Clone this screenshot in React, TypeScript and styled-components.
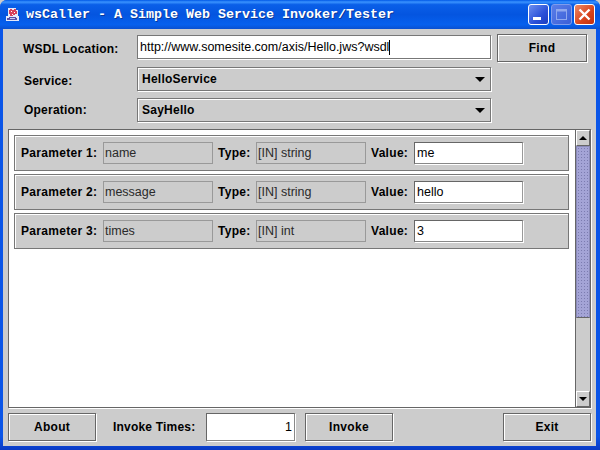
import React from "react";
import styled, { createGlobalStyle } from "styled-components";

const Global = createGlobalStyle`
  html, body { margin: 0; padding: 0; background: #ccc; }
  * { box-sizing: border-box; }
`;

const Win = styled.div`
  width: 600px; height: 450px; display: flex; flex-direction: column;
  background: linear-gradient(180deg, #0a55e8 0%, #0a55e8 97%, #0a3ac4 100%); border-radius: 7px 7px 0 0; overflow: hidden;
  font: 12px "Liberation Sans", Arial, sans-serif; color: #000;
`;
const TitleBar = styled.div`
  height: 29px; flex: none; display: flex; align-items: center; padding: 0 5px 0 5px;
  background: linear-gradient(180deg, #0058e6 0%, #3a93ff 7%, #0a5fe8 16%, #0455e0 50%, #0660ee 85%, #0a50d0 100%);
`;
const Title = styled.div`
  flex: 1; margin-left: 5px; color: #fff; font: bold 13.33px "Liberation Mono", monospace;
  white-space: pre; text-shadow: 1px 1px 0 #0b3a9a;
`;
const WinBtns = styled.div` display: flex; gap: 2px; `;
const WinBtn = styled.div<{ $c: string; $dim?: boolean }>`
  width: 21px; height: 21px; border: 1px solid ${p => (p.$dim ? "#7f9cec" : "#fff")}; border-radius: 3px; background: ${p => p.$c};
  display: flex; align-items: center; justify-content: center;
`;
const Frame = styled.div`
  flex: 1; min-height: 0; margin: 0 4px 4px 3px; background: #ccc;
  display: flex; flex-direction: column; padding: 5px;
`;
const TopForm = styled.div`
  display: grid; grid-template-columns: 129px 354px 90px; align-items: center;
  grid-template-rows: 26px 24px 24px; row-gap: 7px; margin-bottom: 7px;
`;
const FormLabel = styled.div<{ $left: number; $down?: number }>`
  font-weight: bold; letter-spacing: 0.22px; padding-left: ${p => p.$left}px; padding-top: ${p => p.$down ?? 0}px;
`;
const Url = styled.div`
  height: 24px; background: #fff; border: 1px solid #777; box-shadow: 1px 1px 0 #fff;
  display: flex; align-items: center; padding: 0 2px; font-size: 12.5px; white-space: nowrap;
`;
const Caret = styled.span` display: inline-block; width: 1px; height: 15px; background: #000; `;
const FindBtn = styled.button`
  align-self: start; height: 28px; width: 90px; margin-left: 6px; background: #ccc;
  font: bold 12px "Liberation Sans", sans-serif; letter-spacing: 0.3px;
  border: 1px solid #666; border-radius: 0; box-shadow: 1px 1px 0 #fff, inset 1px 1px 0 #fff; padding: 0; color: #000;
`;
const Combo = styled.div`
  height: 24px; border: 1px solid #777; box-shadow: 1px 1px 0 #fff, inset 1px 1px 0 #fff;
  display: flex; align-items: center; justify-content: space-between; padding: 0 5px 0 4px;
  font-weight: bold; letter-spacing: 0.25px;
`;
const Arrow = styled.i<{ $up?: boolean; $w?: number }>`
  display: block; width: 0; height: 0;
  border-left: ${p => p.$w ?? 5}px solid transparent; border-right: ${p => p.$w ?? 5}px solid transparent;
  ${p => (p.$up ? "border-bottom" : "border-top")}: ${p => p.$w ?? 5}px solid #000;
`;
const Pane = styled.div`
  flex: 1; min-height: 0; display: flex; border: 1px solid #666; box-shadow: 1px 1px 0 #fff; background: #fff;
  width: 583px;
`;
const List = styled.div`
  flex: 1; padding: 5px 5px 0 5px; display: flex; flex-direction: column; gap: 3px;
`;
const Row = styled.div`
  height: 36px; background: #ccc; border: 1px solid #777; box-shadow: inset 1px 1px 0 #fff, 1px 1px 0 #fff;
  display: flex; align-items: center; padding-left: 6px; width: 555px;
`;
const B = styled.span<{ $w: number; $ml?: number }>`
  font-weight: bold; letter-spacing: 0.3px; width: ${p => p.$w}px; margin-left: ${p => p.$ml ?? 0}px; flex: none; white-space: nowrap;
`;
const RO = styled.div<{ $w: number }>`
  width: ${p => p.$w}px; height: 22px; border: 1px solid #999; padding: 0 1px; display: flex; align-items: center;
  color: #2a2a2a; flex: none; font-size: 12.5px;
`;
const Val = styled.div`
  width: 109px; height: 22px; background: #fff; border: 1px solid #666; border-right-color: #999; border-bottom-color: #888;
  box-shadow: 1px 1px 0 #fff; padding: 0 2px; display: flex; align-items: center; flex: none; font-size: 12.5px;
`;
const Scroll = styled.div`
  width: 15px; flex: none; display: flex; flex-direction: column; background: #ccc; border-left: 1px solid #666;
`;
const SBtn = styled.div`
  height: 16px; flex: none; background: #ccc; border: 1px solid #fff; border-color: #fff #666 #666 #fff;
  display: flex; align-items: center; justify-content: center;
`;
const Thumb = styled.div`
  height: 172px; flex: none; border: 1px solid #8a8ab8; border-bottom-color: #666;
  background-color: #a4a4d6;
  background-image: radial-gradient(#7c7cb0 0.7px, transparent 0.8px);
  background-size: 3px 3px;
`;
const Track = styled.div` flex: 1; background: #ccc; `;
const Bottom = styled.div`
  display: flex; align-items: center; height: 28px; margin-top: 5px; flex: none;
`;
const Btn = styled.button<{ $ml: number }>`
  width: 88px; height: 28px; margin-left: ${p => p.$ml}px; background: #ccc; color: #000;
  font: bold 12px "Liberation Sans", sans-serif; letter-spacing: 0.3px;
  border: 1px solid #666; border-radius: 0; box-shadow: 1px 1px 0 #fff, inset 1px 1px 0 #fff; padding: 0; flex: none;
`;
const Lbl = styled.span` font-weight: bold; letter-spacing: 0.2px; margin-left: 17px; width: 93px; flex: none; white-space: nowrap; `;
const Times = styled.div`
  width: 89px; height: 28px; background: #fff; border: 1px solid #666; border-right-color: #888; border-bottom-color: #888;
  box-shadow: 1px 1px 0 #fff; display: flex; align-items: center; justify-content: flex-end; padding-right: 2px; font-size: 12.5px; flex: none;
`;

const params = [
  { n: 1, name: "name", type: "[IN] string", value: "me" },
  { n: 2, name: "message", type: "[IN] string", value: "hello" },
  { n: 3, name: "times", type: "[IN] int", value: "3" },
];

export default function App() {
  return (
    <Win>
      <Global />
      <TitleBar>
        <svg width="16" height="16" viewBox="0 0 16 16" shapeRendering="crispEdges">
          <path d="M3 1h8v2h2v6h1v5H1V9h2V1z" fill="#e4e8fa" />
          <path d="M5 2h2v1h2V2h2v2h1v3h-2v1H8v1H5V7H4V3h1z" fill="#d8405c" />
          <path d="M6 4h1v1H6zM9 5h1v1H9zM7 7h1v1H7z" fill="#fff" />
          <path d="M4 10h7v1h1v2H2v-2h2z" fill="#5a50a8" />
          <path d="M5 11h5v1H5z" fill="#c8c8f0" />
        </svg>
        <Title>wsCaller - A Simple Web Service Invoker/Tester</Title>
        <WinBtns>
          <WinBtn $c="linear-gradient(135deg,#6d8ff0,#2a50d8 60%,#1c3fc0)">
            <svg width="15" height="15" viewBox="0 0 15 15"><rect x="2" y="10" width="8" height="3" fill="#fff" /></svg>
          </WinBtn>
          <WinBtn $dim $c="linear-gradient(135deg,#5a7ee8,#3a5fd8)">
            <svg width="15" height="15" viewBox="0 0 15 15" fill="none"><rect x="2.5" y="2.5" width="10" height="10" stroke="#8fa8ee" /><rect x="2" y="2" width="11" height="2.5" fill="#8fa8ee" /></svg>
          </WinBtn>
          <WinBtn $c="linear-gradient(135deg,#ec8a68,#d8431c 60%,#c03010)">
            <svg width="15" height="15" viewBox="0 0 15 15"><path d="M2.5 2.5l10 10M12.5 2.5l-10 10" stroke="#fff" strokeWidth="2.4" /></svg>
          </WinBtn>
        </WinBtns>
      </TitleBar>
      <Frame>
        <TopForm>
          <FormLabel $left={15} $down={4}>WSDL Location:</FormLabel>
          <Url>http://www.somesite.com/axis/Hello.jws?wsdl<Caret /></Url>
          <FindBtn>Find</FindBtn>
          <FormLabel $left={16} $down={4}>Service:</FormLabel>
          <Combo>HelloService<Arrow /></Combo>
          <span />
          <FormLabel $left={16}>Operation:</FormLabel>
          <Combo>SayHello<Arrow /></Combo>
          <span />
        </TopForm>
        <Pane>
          <List>
            {params.map(p => (
              <Row key={p.n}>
                <B $w={82}>Parameter {p.n}:</B>
                <RO $w={110}>{p.name}</RO>
                <B $w={38} $ml={5}>Type:</B>
                <RO $w={110}>{p.type}</RO>
                <B $w={43} $ml={5}>Value:</B>
                <Val>{p.value}</Val>
              </Row>
            ))}
          </List>
          <Scroll>
            <SBtn><Arrow $up $w={4} /></SBtn>
            <Thumb />
            <Track />
            <SBtn><Arrow $w={4} /></SBtn>
          </Scroll>
        </Pane>
        <Bottom>
          <Btn $ml={0}>About</Btn>
          <Lbl>Invoke Times:</Lbl>
          <Times>1</Times>
          <Btn $ml={10}>Invoke</Btn>
          <Btn $ml={110}>Exit</Btn>
        </Bottom>
      </Frame>
    </Win>
  );
}
